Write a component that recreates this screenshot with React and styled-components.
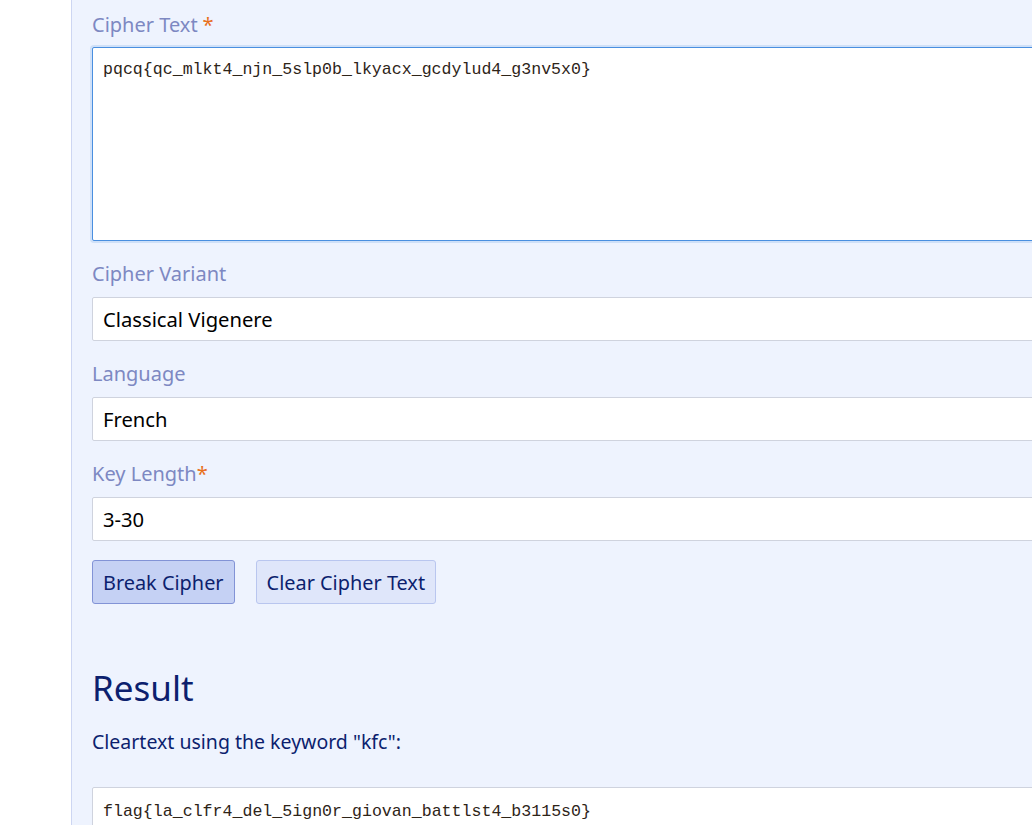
import React from "react";
import styled, { createGlobalStyle } from "styled-components";

const Global = createGlobalStyle`
  html, body { margin: 0; padding: 0; background: #ffffff; overflow: hidden; }
  body { font-family: "Noto Sans", "Liberation Sans", sans-serif; }
`;

const Page = styled.div`
  display: flex;
  width: 1032px;
  height: 825px;
  overflow: hidden;
`;

const Gutter = styled.div`
  flex: 0 0 71px;
  background: #ffffff;
`;

const Panel = styled.main`
  flex: 0 0 1100px;
  background: #eef3fe;
  border-left: 1px solid #cdd6f2;
  padding: 12px 0 0 20px;
  box-sizing: border-box;
`;

const Field = styled.div`
  display: flex;
  flex-direction: column;
  margin-bottom: 20px;
`;

const Label = styled.label`
  font-size: 20px;
  line-height: 26px;
  color: #7d88c2;
  margin-bottom: ${(p) => (p.$tight ? "9px" : "10px")};
`;

const Req = styled.span`
  color: #e8701c;
  margin-left: ${(p) => (p.$gap ? "5px" : "0")};
`;

const TextArea = styled.textarea`
  display: block;
  width: 1000px;
  height: 194px;
  box-sizing: border-box;
  margin: 0;
  padding: 11px 10px;
  border: 1px solid #4a8fe0;
  border-radius: 2px;
  box-shadow: 0 0 0 2px #cfe0f8;
  background: #ffffff;
  font-family: "Liberation Mono", "DejaVu Sans Mono", monospace;
  font-size: 16.6px;
  line-height: 22px;
  color: #2e2418;
  resize: none;
  outline: none;
`;

const Input = styled.div`
  width: 1000px;
  height: 44px;
  box-sizing: border-box;
  border: 1px solid #cfd3de;
  border-radius: 2px;
  background: #ffffff;
  padding: 0 10px;
  display: flex;
  align-items: center;
  font-size: 20.2px;
  color: #000000;
`;

const Buttons = styled.div`
  display: flex;
  gap: 21px;
  margin-top: -1px;
`;

const Button = styled.button`
  height: 44px;
  box-sizing: border-box;
  padding: 0 10px;
  border-radius: 3px;
  font-family: "Noto Sans", "Liberation Sans", sans-serif;
  font-size: 19.9px;
  color: #0c1f6e;
  background: ${(p) => (p.$primary ? "#c5d1f4" : "#dfe6fa")};
  border: 1px solid ${(p) => (p.$primary ? "#8293d6" : "#b9c6ef")};
  cursor: pointer;
`;

const Heading = styled.h2`
  margin: 60px 0 0 0;
  font-size: 35px;
  line-height: 48px;
  font-weight: 400;
  color: #0c1f6e;
`;

const Caption = styled.p`
  margin: 16px 0 0 0;
  font-size: 19.5px;
  line-height: 28px;
  color: #0c1f6e;
`;

const ResultBox = styled.div`
  margin-top: 31px;
  width: 1000px;
  height: 80px;
  box-sizing: border-box;
  border: 1px solid #cfd3de;
  border-radius: 2px;
  background: #ffffff;
  padding: 13px 10px;
  font-family: "Liberation Mono", "DejaVu Sans Mono", monospace;
  font-size: 16.6px;
  line-height: 22px;
  color: #2e2418;
`;

export default function App() {
  return (
    <>
      <Global />
      <Page>
        <Gutter />
        <Panel>
          <Field>
            <Label $tight>
              Cipher Text<Req $gap>*</Req>
            </Label>
            <TextArea
              readOnly
              value="pqcq{qc_mlkt4_njn_5slp0b_lkyacx_gcdylud4_g3nv5x0}"
            />
          </Field>
          <Field>
            <Label>Cipher Variant</Label>
            <Input>Classical Vigenere</Input>
          </Field>
          <Field>
            <Label>Language</Label>
            <Input>French</Input>
          </Field>
          <Field>
            <Label>
              Key Length<Req>*</Req>
            </Label>
            <Input>3-30</Input>
          </Field>
          <Buttons>
            <Button $primary>Break Cipher</Button>
            <Button>Clear Cipher Text</Button>
          </Buttons>
          <Heading>Result</Heading>
          <Caption>Cleartext using the keyword "kfc":</Caption>
          <ResultBox>flag{"{"}la_clfr4_del_5ign0r_giovan_battlst4_b3115s0{"}"}</ResultBox>
        </Panel>
      </Page>
    </>
  );
}
